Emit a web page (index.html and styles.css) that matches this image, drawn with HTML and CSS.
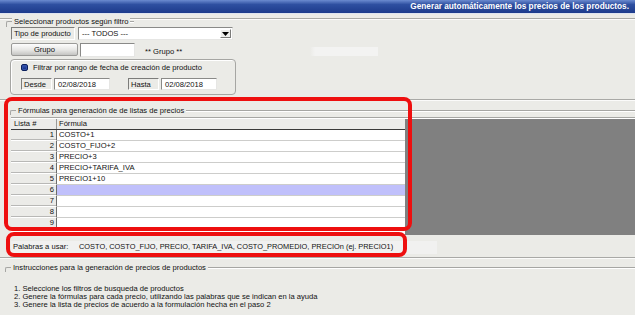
FILE: index.html
```html
<!DOCTYPE html>
<html lang="es">
<head>
<meta charset="utf-8">
<link rel="stylesheet" href="styles.css">
</head>
<body>
<div class="title">Generar automáticamente los precios de los productos.</div>
<div class="sep top-sep"></div>

<section class="filter">
  <div class="gb-head mini">
    <span class="c"></span><span class="cap">Seleccionar productos según filtro</span><span class="l short"></span>
  </div>
  <div class="row r1">
    <span class="lbl tipo">Tipo de producto</span>
    <div class="combo"><span class="ctext">--- TODOS ---</span><span class="arrow"><svg width="7" height="4" viewBox="0 0 7 4"><path d="M0 0h7L3.5 4z" fill="#000"/></svg></span></div>
  </div>
  <div class="row r2">
    <span class="btn">Grupo</span>
    <span class="input grp"></span>
    <span class="grp-lbl">** Grupo **</span>
  </div>
  <div class="datebox">
    <div class="chk-row"><span class="chk"></span><span>Filtrar por rango de fecha de creación de producto</span></div>
    <div class="date-row">
      <span class="lbl dl">Desde</span><span class="input date">02/08/2018</span>
      <span class="lbl dl hasta">Hasta</span><span class="input date">02/08/2018</span>
    </div>
  </div>
</section>

<div class="sep mid-sep"></div>

<section class="formulas">
  <div class="gb-head">
    <span class="c"></span><span class="cap">Fórmulas para generación de de listas de precios</span><span class="l"></span>
  </div>
  <div class="grid">
    <div class="cols">
      <div class="grow head"><span class="n">Lista #</span><span class="f">Fórmula</span></div>
      <div class="grow"><span class="n r">1</span><span class="f">COSTO+1</span></div>
      <div class="grow"><span class="n r">2</span><span class="f">COSTO_FIJO+2</span></div>
      <div class="grow"><span class="n r">3</span><span class="f">PRECIO+3</span></div>
      <div class="grow"><span class="n r">4</span><span class="f">PRECIO+TARIFA_IVA</span></div>
      <div class="grow"><span class="n r">5</span><span class="f">PRECIO1+10</span></div>
      <div class="grow sel"><span class="n r">6</span><span class="f"></span></div>
      <div class="grow"><span class="n r">7</span><span class="f"></span></div>
      <div class="grow"><span class="n r">8</span><span class="f"></span></div>
      <div class="grow"><span class="n r">9</span><span class="f"></span></div>
    </div>
    <div class="empty"></div>
  </div>
</section>

<div class="palabras">
  <span class="pl">Palabras a usar:</span><span class="pw">COSTO, COSTO_FIJO, PRECIO, TARIFA_IVA, COSTO_PROMEDIO, PRECIOn (ej. PRECIO1)</span>
</div>

<div class="sep low-sep"></div>

<section class="instr">
  <div class="gb-head">
    <span class="c"></span><span class="cap">Instrucciones para la generación de precios de productos</span><span class="l"></span>
  </div>
  <ol class="steps">
    <li>1. Seleccione los filtros de busqueda de productos</li>
    <li>2. Genere la fórmulas para cada precio, utilizando las palabras que se indican en la ayuda</li>
    <li>3. Genere la lista de precios de acuerdo a la formulación hecha en el paso 2</li>
  </ol>
</section>

<div class="mark mark1"></div>
<div class="mark mark2"></div>
</body>
</html>
```

FILE: styles.css
```css
html, body {
  margin: 0;
  padding: 0;
}
body {
  width: 635px;
  height: 315px;
  overflow: hidden;
  background: #ebebe7;
  font-family: "Liberation Sans", Arial, sans-serif;
  font-size: 7.6px;
  color: #111;
  position: relative;
}

.title {
  height: 13px;
  line-height: 13px;
  background: linear-gradient(#6b8bd0 0%, #2e4fa0 35%, #1d3b8c 100%);
  color: #fff;
  font-weight: bold;
  font-size: 8.25px;
  text-align: right;
  padding-right: 6px;
  border-bottom: 1px solid #dde3ef;
}

.sep {
  border-top: 1px solid #a9a9a6;
  border-bottom: 1px solid #fbfbfa;
}
.top-sep { margin-top: 4px; }

/* group box heads */
.gb-head {
  display: flex;
  height: 9px;
  line-height: 9px;
}
.gb-head .c {
  width: 5px;
  margin-top: 4px;
  border-top: 1px solid #a6a6a3;
  border-left: 1px solid #a6a6a3;
  border-top-left-radius: 2px;
}
.gb-head .cap {
  padding: 0 2px;
  background: #ebebe7;
  white-space: nowrap;
}
.gb-head .l {
  flex: 1;
  margin-top: 4px;
  border-top: 1px solid #a6a6a3;
  box-shadow: 0 1px 0 #fff;
  height: 0;
}
.gb-head .l.short { flex: 0 0 4px; }

.filter {
  padding-left: 6px;
}
.gb-head.mini {
  margin-top: -3px;
  height: 10px;
}

.row {
  display: flex;
  align-items: stretch;
  height: 13px;
  margin-left: 5px;
}
.r2 { margin-top: 3px; }

.lbl {
  box-sizing: border-box;
  border: 1px solid;
  border-color: #7c7c7a #fff #fff #7c7c7a;
  padding-left: 2px;
  line-height: 11px;
  white-space: nowrap;
}
.tipo { width: 64px; }

.combo {
  margin-left: 3px;
  width: 155px;
  box-sizing: border-box;
  display: flex;
  background: #fff;
  border: 1px solid;
  border-color: #8a8a88 #e6e6e4 #e6e6e4 #8a8a88;
}
.ctext {
  flex: 1;
  padding-left: 3px;
  line-height: 11px;
}
.arrow {
  width: 11px;
  margin: 1px;
  box-sizing: border-box;
  background: #eeeeec;
  border: 1px solid;
  border-color: #fff #7c7c7a #7c7c7a #fff;
  display: flex;
  align-items: center;
  justify-content: center;
}

.btn {
  width: 67px;
  box-sizing: border-box;
  border: 1px solid #9a9a98;
  border-radius: 2px;
  background: linear-gradient(#fdfdfd 0%, #e6e6e4 55%, #c4c4c2 100%);
  text-align: center;
  line-height: 11px;
}
.input {
  box-sizing: border-box;
  background: #fff;
  border: 1px solid;
  border-color: #8a8a88 #e6e6e4 #e6e6e4 #8a8a88;
  line-height: 11px;
  padding-left: 3px;
}
.grp {
  margin-left: 2px;
  width: 55px;
  height: 14px;
}
.grp-lbl {
  margin-left: 5px;
  margin-top: 4px;
  height: 9px;
  line-height: 9px;
  width: 238px;
  padding-left: 5px;
  box-sizing: border-box;
  background: linear-gradient(90deg, #ebebe7 0, #ebebe7 170px, #f3f3f2 175px);
}

.datebox {
  margin: 3px 0 0 4px;
  width: 226px;
  height: 36px;
  box-sizing: border-box;
  border: 1px solid #a6a6a3;
  border-radius: 4px;
  box-shadow: inset 1px 1px 0 #fff;
  padding: 3px 0 0 10px;
}
.chk-row {
  display: flex;
  align-items: center;
  height: 9px;
  gap: 5px;
}
.chk {
  width: 7px;
  height: 7px;
  border-radius: 2px;
  background: linear-gradient(#3a5ab8, #0d2a80);
  border: 1px solid #0a1f5c;
  box-sizing: border-box;
  box-shadow: inset 0 0 0 1px #3552a8;
}
.date-row {
  display: flex;
  margin-top: 6px;
  height: 12px;
}
.dl { width: 31px; }
.date {
  margin-left: 2px;
  width: 56px;
}
.hasta { margin-left: 18px; }

.mid-sep { margin-top: 4px; }

/* formulas */
.formulas {
  padding-left: 10px;
  margin-top: 5px;
}
.grid {
  margin: 2px 0 0 1px;
  display: flex;
  height: 116px;
  overflow: hidden;
  border-top: 1px solid #a6a6a3;
  box-shadow: inset 0 1px 0 #fff;
  padding-top: 1px;
}
.cols { width: 394px; background: #fff; }
.empty {
  flex: 1;
  background: #808080;
}
.grow {
  display: flex;
  height: 11px;
  line-height: 10px;
}
.grow .n {
  width: 46px;
  box-sizing: border-box;
  background: #ebebe8;
  border-right: 1px solid #6e6e6c;
  border-bottom: 1px solid #fff;
  box-shadow: inset 0 -1px 0 #b8b8b6;
  padding: 0 2px;
}
.grow .n.r { text-align: right; }
.grow .f {
  flex: 1;
  background: #fff;
  border-bottom: 1px solid #cdcdcb;
  padding-left: 2px;
}
.grow.head { height: 10px; border-bottom: 1px solid #3a3a3a; }
.grow.head .n, .grow.head .f {
  background: #ececea;
  border-bottom: 0;
  box-shadow: none;
  line-height: 10px;
}
.grow.head .n { border-right: 1px solid #9a9a98; padding-left: 3px; }
.grow.sel .f { background: #c0c0fb; }

/* palabras */
.palabras {
  margin: 6px 0 0 11px;
  width: 426px;
  height: 13px;
  line-height: 11px;
  background: #f1f1f0;
  display: flex;
}
.pl { width: 66px; padding-left: 2px; }
.pw { white-space: nowrap; font-size: 7.4px; }

.low-sep { margin-top: 3px; }

.instr {
  padding-left: 5px;
  margin-top: 4px;
}
.steps {
  list-style: none;
  margin: 13px 0 0 9px;
  padding: 0;
  line-height: 8px;
}

/* red annotation frames */
.mark {
  position: absolute;
  box-sizing: border-box;
  border: 4px solid #ee0f0f;
  border-radius: 8px;
}
.mark1 { left: 4px; top: 97px; width: 408px; height: 134px; }
.mark2 { left: 6px; top: 232px; width: 401px; height: 25px; }
```
